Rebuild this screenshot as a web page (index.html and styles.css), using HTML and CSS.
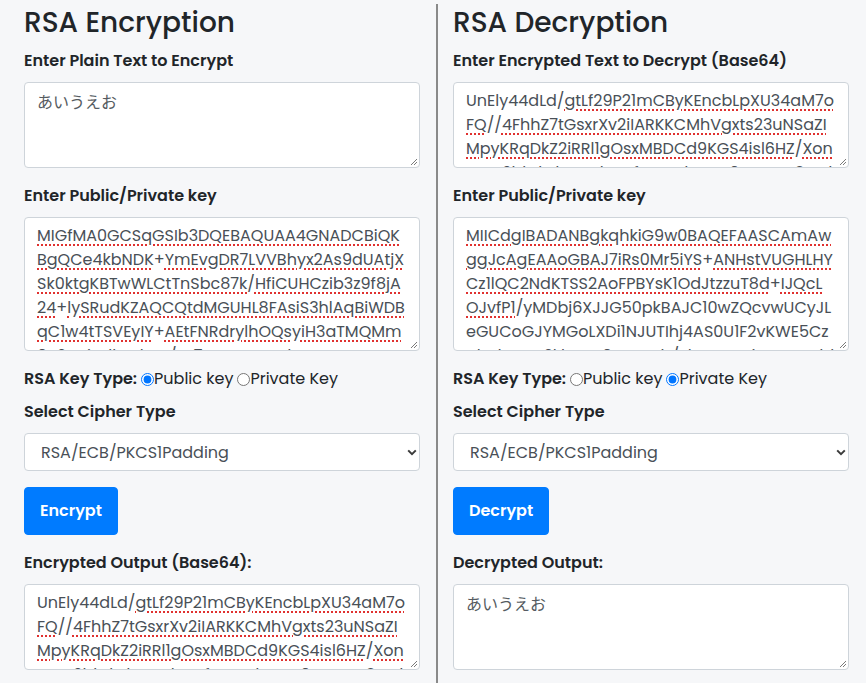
FILE: index.html
```html
<!DOCTYPE html>
<html lang="en">
<head>
<meta charset="utf-8">
<title>RSA Encryption / Decryption</title>
<link rel="stylesheet" href="styles.css">
</head>
<body>
<div class="page">
  <section class="col col-left">
    <h3 class="title">RSA Encryption</h3>
    <div class="group">
      <label class="label">Enter Plain Text to Encrypt</label>
      <div class="textbox rows-3 jp">あいうえお<svg class="grip" width="9" height="9" viewBox="0 0 9 9"><path d="M8 2 2 8M8 5 5 8" stroke="#7a7a7a" stroke-width="1"/></svg></div>
    </div>
    <div class="group">
      <label class="label">Enter Public/Private key</label>
      <div class="textbox rows-5"><span class="sp">MIGfMA0GCSqGSIb3DQEBAQUAA4GNADCBiQK</span>
<span class="sp">BgQCe4kbNDK</span>+<span class="sp">YmEvgDR7LVVBhyx2As9dUAtjX</span>
<span class="sp">Sk0ktgKBTwWLCtTnSbc87k</span>/<span class="sp">HfiCUHCzib3z9f8jA</span>
<span class="sp">24</span>+<span class="sp">lySRudKZAQCQtdMGUHL8FAsiS3hlAqBiWDB</span>
<span class="sp">qC1w4tTSVEyIY</span>+<span class="sp">AEtFNRdrylhOQsyiH3aTMQMm</span>
<span class="sp">9e2XqicxlkpJbVx</span>/<span class="sp">wI7FyvUtNHwdB4pLqA4D</span><svg class="grip" width="9" height="9" viewBox="0 0 9 9"><path d="M8 2 2 8M8 5 5 8" stroke="#7a7a7a" stroke-width="1"/></svg></div>
    </div>
    <div class="radio-row">
      <span class="strong">RSA Key Type:</span>
      <label class="opt"><input type="radio" name="kt1" checked>Public key</label>
      <label class="opt"><input type="radio" name="kt1">Private Key</label>
    </div>
    <div class="group">
      <label class="label">Select Cipher Type</label>
      <div class="select-wrap">
        <select class="select"><option>RSA/ECB/PKCS1Padding</option></select>
        <svg class="chev" width="10" height="7" viewBox="0 0 10 7"><path d="M1.2 1.4 5 5.2 8.8 1.4" fill="none" stroke="#3b3b3b" stroke-width="2"/></svg>
      </div>
    </div>
    <div class="group">
      <button class="btn">Encrypt</button>
    </div>
    <div class="group">
      <label class="label">Encrypted Output (Base64):</label>
      <div class="textbox rows-3">UnEly44dLd/<span class="sp">gtLf29P21mCByKEncbLpXU34aM7o</span>
<span class="sp">FQ</span>//<span class="sp">4FhhZ7tGsxrXv2iIARKKCMhVgxts23uNSaZI</span>
<span class="sp">MpyKRqDkZ2iRRl1gOsxMBDCd9KGS4isl6HZ</span>/<span class="sp">Xon</span>
<span class="sp">P4sZ2bkxhdVnHskcWfmzNIdqswJ9SmPgc3Ntd</span><svg class="grip" width="9" height="9" viewBox="0 0 9 9"><path d="M8 2 2 8M8 5 5 8" stroke="#7a7a7a" stroke-width="1"/></svg></div>
    </div>
  </section>
  <section class="col col-right">
    <h3 class="title">RSA Decryption</h3>
    <div class="group">
      <label class="label">Enter Encrypted Text to Decrypt (Base64)</label>
      <div class="textbox rows-3">UnEly44dLd/<span class="sp">gtLf29P21mCByKEncbLpXU34aM7o</span>
<span class="sp">FQ</span>//<span class="sp">4FhhZ7tGsxrXv2iIARKKCMhVgxts23uNSaZI</span>
<span class="sp">MpyKRqDkZ2iRRl1gOsxMBDCd9KGS4isl6HZ</span>/<span class="sp">Xon</span>
<span class="sp">P4sZ2bkxhdVnHskcWfmzNIdqswJ9SmPgc3Ntd</span><svg class="grip" width="9" height="9" viewBox="0 0 9 9"><path d="M8 2 2 8M8 5 5 8" stroke="#7a7a7a" stroke-width="1"/></svg></div>
    </div>
    <div class="group">
      <label class="label">Enter Public/Private key</label>
      <div class="textbox rows-5"><span class="sp">MIICdgIBADANBgkqhkiG9w0BAQEFAASCAmAw</span>
<span class="sp">ggJcAgEAAoGBAJ7iRs0Mr5iYS</span>+<span class="sp">ANHstVUGHLHY</span>
<span class="sp">Cz1lQC2NdKTSS2AoFPBYsK1OdJtzzuT8d</span>+<span class="sp">IJQcL</span>
<span class="sp">OJvfP1</span>/yMDbj6XJJG50pkBAJC10wZQcvwUCyJL
eGUCoGJYMGoLXDi1NJUTIhj4AS0U1F2vKWE5Cz
Ul4dnVeH2kbPwx9GuYmb/ZhtNAyrqjTsBoUPdLkD<svg class="grip" width="9" height="9" viewBox="0 0 9 9"><path d="M8 2 2 8M8 5 5 8" stroke="#7a7a7a" stroke-width="1"/></svg></div>
    </div>
    <div class="radio-row">
      <span class="strong">RSA Key Type:</span>
      <label class="opt"><input type="radio" name="kt2">Public key</label>
      <label class="opt"><input type="radio" name="kt2" checked>Private Key</label>
    </div>
    <div class="group">
      <label class="label">Select Cipher Type</label>
      <div class="select-wrap">
        <select class="select"><option>RSA/ECB/PKCS1Padding</option></select>
        <svg class="chev" width="10" height="7" viewBox="0 0 10 7"><path d="M1.2 1.4 5 5.2 8.8 1.4" fill="none" stroke="#3b3b3b" stroke-width="2"/></svg>
      </div>
    </div>
    <div class="group">
      <button class="btn">Decrypt</button>
    </div>
    <div class="group">
      <label class="label">Decrypted Output:</label>
      <div class="textbox rows-3 jp">あいうえお<svg class="grip" width="9" height="9" viewBox="0 0 9 9"><path d="M8 2 2 8M8 5 5 8" stroke="#7a7a7a" stroke-width="1"/></svg></div>
    </div>
  </section>
</div>
</body>
</html>
```

FILE: styles.css
```css
* { box-sizing: border-box; }

html, body {
  margin: 0;
  padding: 0;
  background: #f6f7f9;
}

body {
  font-family: "Poppins", "Open Sans", "Noto Sans CJK JP", sans-serif;
  font-size: 16px;
  line-height: 24px;
  color: #212529;
}

.page {
  display: flex;
  padding-top: 4px;
  min-height: 700px;
}

.col {
  display: flex;
  flex-direction: column;
  min-width: 0;
}

.col-left {
  flex: 0 0 436px;
  padding: 0 16px 0 24px;
}

.col-right {
  flex: 0 0 430px;
  padding: 0 17px 0 15px;
  border-left: 2px solid #8a8a8a;
}

.title {
  margin: 1px 0 8px;
  font-size: 28px;
  line-height: 36px;
  font-weight: 500;
  color: #212529;
}

.group {
  display: flex;
  flex-direction: column;
  align-items: stretch;
  margin-bottom: 16px;
}

.label {
  display: block;
  margin-bottom: 9px;
  font-weight: 600;
  font-size: 16px;
}

.textbox {
  position: relative;
  width: 100%;
  background: #fff;
  border: 1px solid #ced4da;
  border-radius: 4px;
  padding: 6px 12px;
  color: #495057;
  white-space: pre;
  overflow: hidden;
  font-size: 16px;
  line-height: 24px;
}

.rows-3 { height: 86px; }
.rows-5 { height: 134px; }

.jp {
  font-family: "Noto Sans CJK JP", sans-serif;
  font-size: 16px;
  color: #555b61;
}

.sp {
  text-decoration: underline dotted #e0312f;
  text-decoration-thickness: 2px;
  text-underline-offset: 3px;
}

.grip {
  position: absolute;
  right: 1px;
  bottom: 1px;
}

.radio-row {
  display: flex;
  align-items: center;
  margin-bottom: 9px;
  height: 24px;
}

.strong {
  font-weight: 600;
}

.opt {
  display: inline-flex;
  align-items: center;
}

.opt input {
  margin: 0 0 0 4px;
  width: 13px;
  height: 13px;
}

.select-wrap {
  position: relative;
}

.select {
  -webkit-appearance: none;
  appearance: none;
  width: 100%;
  height: 38px;
  background: #fff;
  border: 1px solid #ced4da;
  border-radius: 4px;
  padding: 0 28px 0 16px;
  font-family: inherit;
  font-size: 16px;
  color: #495057;
}

.chev {
  position: absolute;
  right: 3px;
  top: 16px;
}

.btn {
  align-self: flex-start;
  background: #007bff;
  color: #fff;
  border: 1px solid #007bff;
  border-radius: 4px;
  padding: 11px 15px;
  font-family: inherit;
  font-size: 16px;
  line-height: 24px;
  font-weight: 600;
  height: 48px;
}
```
